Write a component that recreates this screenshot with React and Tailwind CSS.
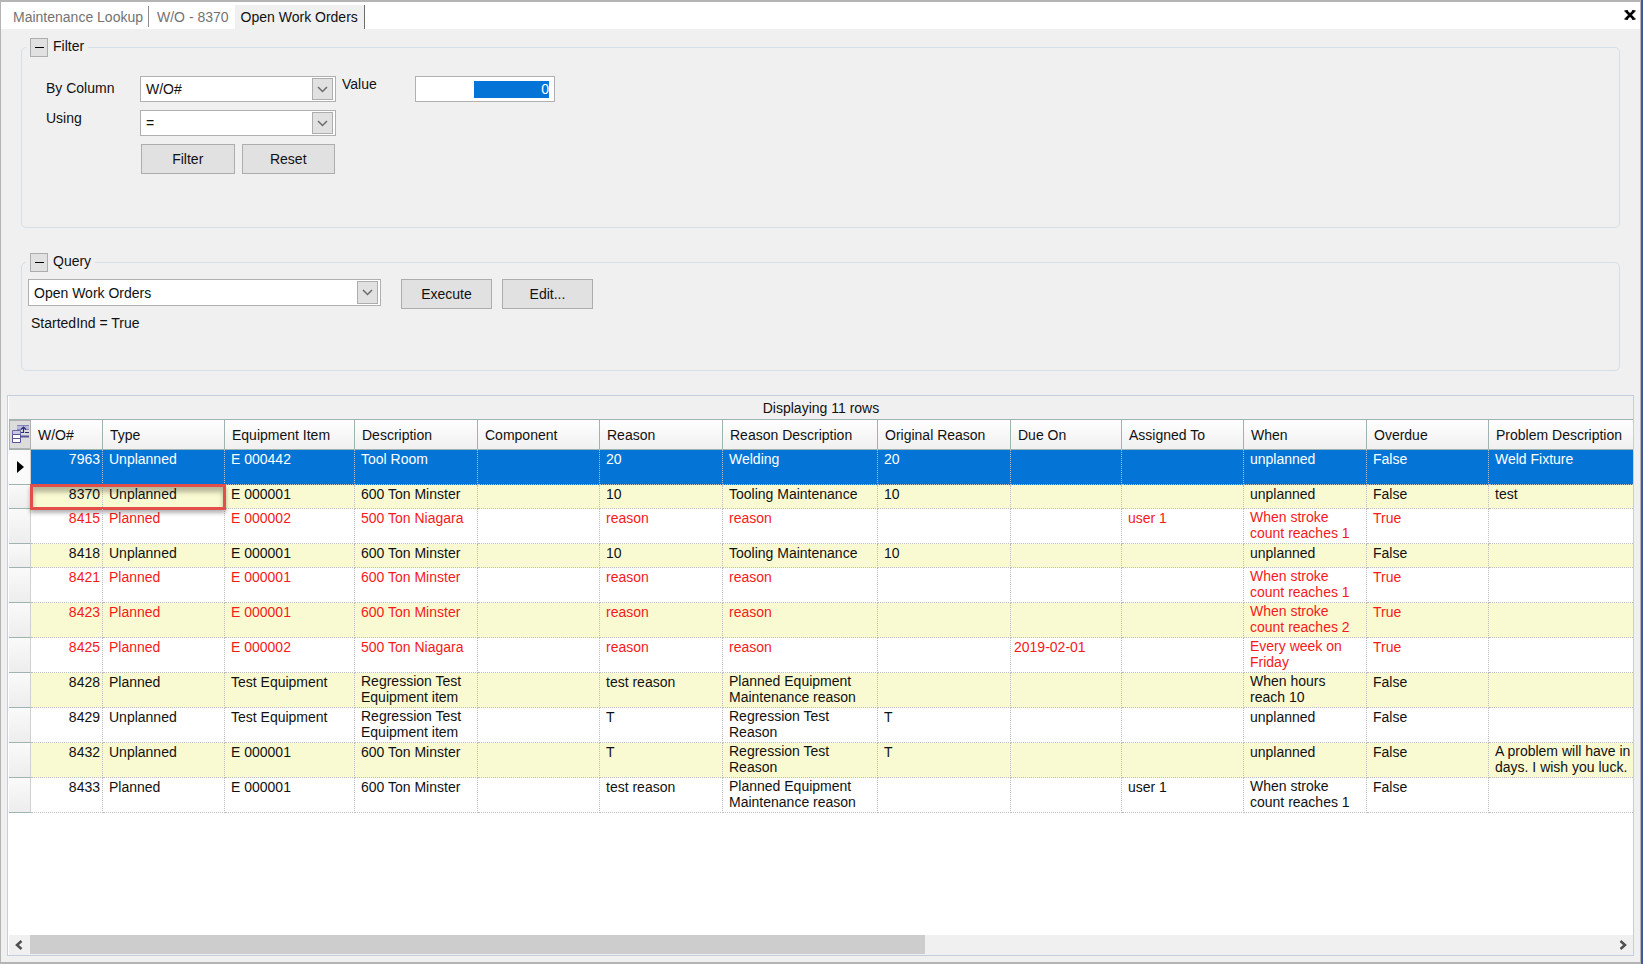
import React, { useState } from "react";
import clsx from "clsx";

const TABS = [
  { id: "lookup", name: "Maintenance Lookup", className: "border-r border-[#8c8c8c] pl-3 pr-[5px]" },
  { id: "wo", name: "W/O - 8370", className: "pl-2 pr-1.5" },
  { id: "open", name: "Open Work Orders", className: "px-1.5" },
];

const COLUMNS = [
  { key: "wo", label: "W/O#", width: "w-[72px]" },
  { key: "type", label: "Type", width: "w-[122px]" },
  { key: "item", label: "Equipment Item", width: "w-[130px]" },
  { key: "description", label: "Description", width: "w-[123px]" },
  { key: "component", label: "Component", width: "w-[122px]" },
  { key: "reason", label: "Reason", width: "w-[123px]" },
  { key: "reasonText", label: "Reason Description", width: "w-[155px]" },
  { key: "original", label: "Original Reason", width: "w-[133px]" },
  { key: "due", label: "Due On", width: "w-[111px]" },
  { key: "assigned", label: "Assigned To", width: "w-[122px]" },
  { key: "when", label: "When", width: "w-[123px]" },
  { key: "overdue", label: "Overdue", width: "w-[122px]" },
  { key: "problem", label: "Problem Description", width: "" },
];

const REGRESSION_ITEM = "Regression Test\nEquipment item";
const REGRESSION_REASON = "Regression Test\nReason";
const PLANNED_REASON = "Planned Equipment\nMaintenance reason";

const ROWS = [
  { wo: 7963, type: "Unplanned", item: "E 000442", description: "Tool Room", reason: "20", reasonText: "Welding", original: "20", when: "unplanned", overdue: "False", problem: "Weld Fixture" },
  { wo: 8370, type: "Unplanned", item: "E 000001", description: "600 Ton Minster", reason: "10", reasonText: "Tooling Maintenance", original: "10", when: "unplanned", overdue: "False", problem: "test", short: true },
  { wo: 8415, type: "Planned", item: "E 000002", description: "500 Ton Niagara", reason: "reason", reasonText: "reason", assigned: "user 1", when: "When stroke\ncount reaches 1", overdue: "True" },
  { wo: 8418, type: "Unplanned", item: "E 000001", description: "600 Ton Minster", reason: "10", reasonText: "Tooling Maintenance", original: "10", when: "unplanned", overdue: "False", short: true },
  { wo: 8421, type: "Planned", item: "E 000001", description: "600 Ton Minster", reason: "reason", reasonText: "reason", when: "When stroke\ncount reaches 1", overdue: "True" },
  { wo: 8423, type: "Planned", item: "E 000001", description: "600 Ton Minster", reason: "reason", reasonText: "reason", when: "When stroke\ncount reaches 2", overdue: "True" },
  { wo: 8425, type: "Planned", item: "E 000002", description: "500 Ton Niagara", reason: "reason", reasonText: "reason", due: "2019-02-01", when: "Every week on\nFriday", overdue: "True" },
  { wo: 8428, type: "Planned", item: "Test Equipment", description: REGRESSION_ITEM, reason: "test reason", reasonText: PLANNED_REASON, when: "When hours\nreach 10", overdue: "False" },
  { wo: 8429, type: "Unplanned", item: "Test Equipment", description: REGRESSION_ITEM, reason: "T", reasonText: REGRESSION_REASON, original: "T", when: "unplanned", overdue: "False" },
  { wo: 8432, type: "Unplanned", item: "E 000001", description: "600 Ton Minster", reason: "T", reasonText: REGRESSION_REASON, original: "T", when: "unplanned", overdue: "False", problem: "A problem will have in\ndays. I wish you luck." },
  { wo: 8433, type: "Planned", item: "E 000001", description: "600 Ton Minster", reason: "test reason", reasonText: PLANNED_REASON, assigned: "user 1", when: "When stroke\ncount reaches 1", overdue: "False" },
];

const MARKED_WO = 8370;

function Button({ className, children, ...props }) {
  return (
    <button
      type="button"
      className={clsx("h-[30px] border border-[#adadad] bg-[#e1e1e1] text-center", className)}
      {...props}
    >
      {children}
    </button>
  );
}

function Combo({ id, label, options, className }) {
  return (
    <div className={clsx("relative", className)}>
      <select
        id={id}
        aria-label={label}
        className="size-full appearance-none rounded-none border border-[#b0b0b0] bg-white pl-[5px] pr-6 outline-none"
      >
        {options.map((o) => (
          <option key={o}>{o}</option>
        ))}
      </select>
      <span className="pointer-events-none absolute inset-y-0.5 right-[3px] flex w-[21px] items-center justify-center border border-[#adadad] bg-[#e1e1e1]">
        <svg width="11" height="7" viewBox="0 0 11 7" fill="none" stroke="#6b6b6b" strokeWidth="1.5">
          <path d="M1 1l4.5 4.5L10 1" />
        </svg>
      </span>
    </div>
  );
}

function GroupBox({ title, className, children }) {
  return (
    <fieldset className={clsx("mx-5 min-w-0 rounded-[5px] border border-[#d5dfe5]", className)}>
      <legend className="ml-1 flex items-center gap-[5px] px-1">
        <button
          type="button"
          aria-label={`Collapse ${title}`}
          className="flex h-[19px] w-[18px] items-center justify-center border border-[#adadad] bg-[#e1e1e1]"
        >
          <span className="h-px w-[9px] bg-black" />
        </button>
        <span className="-mt-1">{title}</span>
      </legend>
      {children}
    </fieldset>
  );
}

function FieldChooserIcon() {
  return (
    <svg width="17" height="19" viewBox="0 0 17 19" fill="none">
      <path d="M5 .5h12v4H5z" fill="#b9b9dc" />
      <path d="M5 .5h12M5 4.500h4M13 4.500h4" stroke="#8585b5" />
      <path d="M.5 5.500h8v4h-8z" fill="#c9c9e6" stroke="#6a6aa8" />
      <path d="M.5 9.500h8v4h-8zM.5 13.500h8v4h-8z" fill="#fff" stroke="#54549a" />
      <path d="M9 11.500h8" stroke="#54549a" strokeWidth="2" />
      <path d="M9 7.500h2.500V3M9 4.500L11.500 2 14 4.500M13 7.500h4" stroke="#2e2e7a" strokeWidth="1.200" />
    </svg>
  );
}

function Grid({ rows }) {
  const [selected, setSelected] = useState(rows[0].wo);

  return (
    <table className="w-full table-fixed border-separate border-spacing-0">
      <colgroup>
        <col className="w-[22px]" />
        {COLUMNS.map((c) => (
          <col key={c.key} className={c.width} />
        ))}
      </colgroup>
      <thead>
        <tr className="h-[30px]">
          <th className="border-b border-[#9fb3b1] p-0">
            <button
              type="button"
              aria-label="Field chooser"
              className="flex h-[29px] w-full items-center justify-center border border-[#b0b0b0] bg-[#dcdcdc]"
            >
              <FieldChooserIcon />
            </button>
          </th>
          {COLUMNS.map((c) => (
            <th
              key={c.key}
              className="truncate border-b border-r border-[#9fb3b1] bg-linear-to-b from-white to-[#f0f0f0] p-0 pl-[7px] text-left font-normal last:border-r-0"
            >
              {c.label}
            </th>
          ))}
        </tr>
      </thead>
      <tbody>
        {rows.map((row, i) => {
          const isSelected = row.wo === selected;
          return (
            <tr
              key={row.wo}
              onClick={() => setSelected(row.wo)}
              className={clsx(
                row.short ? "h-6" : "h-[35px]",
                isSelected
                  ? "bg-[#0475d7] text-white"
                  : [i % 2 ? "bg-[#fafad2]" : "bg-white", row.overdue === "True" && "text-[#f51a1a]"]
              )}
            >
              <td
                className={clsx(
                  "border-b border-r border-b-[#9fb3b1] border-r-[#d0d0d0] p-0",
                  isSelected ? "bg-[#fafafa]" : "bg-linear-to-b from-[#fafafa] to-[#ededed]"
                )}
              >
                {isSelected && (
                  <svg className="ml-2" width="7" height="12" viewBox="0 0 7 12">
                    <path d="M0 0l7 6-7 6z" fill="#000" />
                  </svg>
                )}
              </td>
              {COLUMNS.map((c) => {
                const text = row[c.key];
                return (
                  <td
                    key={c.key}
                    className={clsx(
                      "whitespace-pre border-b border-r border-dotted border-[#bdbdbd] p-0 align-top last:border-r-0",
                      c.key === "wo" ? "relative pr-0.5 text-right" : c.key === "due" ? "pl-[3px]" : "pl-1.5",
                      !String(text).includes("\n") && "pt-px"
                    )}
                  >
                    {text}
                    {c.key === "wo" && row.wo === MARKED_WO && (
                      <span className="pointer-events-none absolute -left-px -top-px h-[26px] w-[196px] border-3 border-[#e24f4a] shadow-[0_3px_4px_rgba(0,0,0,0.3),inset_0_5px_5px_rgba(0,0,0,0.28)]" />
                    )}
                  </td>
                );
              })}
            </tr>
          );
        })}
      </tbody>
    </table>
  );
}

function ScrollBar() {
  return (
    <div className="flex h-5 bg-[#f0f0f0]">
      <button type="button" aria-label="Scroll left" className="flex w-[21px] items-center justify-center pr-0.5">
        <svg width="8" height="10" viewBox="0 0 8 10" fill="none" stroke="#505050" strokeWidth="2.500">
          <path d="M6.500 1l-4.500 4 4.500 4" />
        </svg>
      </button>
      <div className="flex-1">
        <div className="h-[19px] w-[56.6%] bg-[#cdcdcd]" />
      </div>
      <button type="button" aria-label="Scroll right" className="flex w-[21px] items-center justify-center">
        <svg width="8" height="10" viewBox="0 0 8 10" fill="none" stroke="#505050" strokeWidth="2.500">
          <path d="M1.500 1l4.500 4-4.500 4" />
        </svg>
      </button>
    </div>
  );
}

export default function App() {
  const [tab, setTab] = useState("open");
  const [value, setValue] = useState("0");

  return (
    <div className="flex min-h-screen border-r-2 border-[#3f5a9c] font-['Liberation_Sans',Arial,sans-serif] text-sm leading-4 text-[#111]">
      <div className="flex min-w-0 flex-1 flex-col border-x border-b-2 border-t-2 border-[#b4b4b4] bg-[#f0f0f0]">
        <header className="flex h-[27px] bg-white">
          <nav className="flex flex-1">
            {TABS.map((t) => (
              <button
                key={t.id}
                type="button"
                onClick={() => setTab(t.id)}
                className={clsx(
                  "whitespace-nowrap",
                  t.className,
                  t.id === tab
                    ? "mt-[3px] border-r border-[#6e6e6e] bg-[#f0f0f0] pb-px"
                    : "mt-1 mb-0.5 text-[#737373]"
                )}
              >
                {t.name}
              </button>
            ))}
          </nav>
          <button type="button" aria-label="Close" className="flex items-center px-1 pb-0.5">
            <svg width="12" height="10" viewBox="0 0 12 10" fill="none" stroke="#000" strokeWidth="2.500">
              <path d="M2 1l8 8M10 1l-8 8" />
              <path d="M.5 1H4M8 1h3.500M.5 9H4M8 9h3.500" strokeWidth="1.500" />
            </svg>
          </button>
        </header>

        <GroupBox title="Filter" className="mt-[9px]">
          <div className="grid grid-cols-[94px_196px_79px_140px] items-start gap-y-2 pb-[53px] pl-6 pt-[19px]">
            <label htmlFor="column" className="pt-1">
              By Column
            </label>
            <Combo id="column" options={["W/O#", "Type", "Equipment Item"]} className="h-[26px]" />
            <label htmlFor="value" className="pl-1.5">
              Value
            </label>
            <div className="flex h-[26px] items-center justify-end border border-[#b0b0b0] bg-white pr-[5px]">
              <input
                id="value"
                type="text"
                value={value}
                onChange={(e) => setValue(e.target.value)}
                className="h-[17px] w-[75px] bg-[#0475d7] text-right text-white outline-none"
              />
            </div>
            <label htmlFor="operator">Using</label>
            <Combo id="operator" options={["=", "<", ">"]} className="h-[26px]" />
            <div className="col-start-2 flex gap-[7px] px-px">
              <Button className="flex-1">Filter</Button>
              <Button className="flex-1">Reset</Button>
            </div>
          </div>
        </GroupBox>

        <GroupBox title="Query" className="mt-[25px]">
          <div className="pb-[39px] pl-1.5 pt-[7px]">
            <div className="flex">
              <Combo
                id="query"
                label="Saved query"
                options={["Open Work Orders", "All Work Orders"]}
                className="h-[27px] w-[353px]"
              />
              <Button className="ml-5 w-[91px]">Execute</Button>
              <Button className="ml-2.5 w-[91px]">Edit...</Button>
            </div>
            <p className="mt-1.5 pl-[3px]">StartedInd = True</p>
          </div>
        </GroupBox>

        <section className="mx-1.5 mb-1.5 mt-6 flex flex-1 flex-col border border-[#c5cfdc] bg-white pl-px">
          <div className="h-6 border-b border-[#9fb3b1] bg-[#f0f0f0] pt-1 text-center">
            Displaying {ROWS.length} rows
          </div>
          <div className="flex-1 overflow-hidden">
            <Grid rows={ROWS} />
          </div>
          <ScrollBar />
        </section>
      </div>
    </div>
  );
}
